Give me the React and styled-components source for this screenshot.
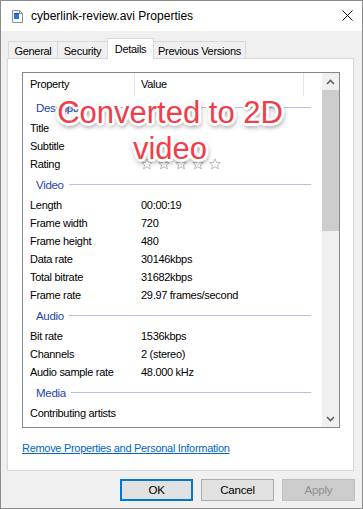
import React from 'react';
import styled, { createGlobalStyle } from 'styled-components';

const GlobalStyle = createGlobalStyle`
  html, body { margin: 0; padding: 0; }
  body {
    width: 363px;
    height: 509px;
    overflow: hidden;
    font-family: "Liberation Sans", Arial, sans-serif;
    -webkit-font-smoothing: antialiased;
  }
`;

const Window = styled.div`
  width: 363px;
  height: 509px;
  box-sizing: border-box;
  border: 1px solid #8c8c8c;
  background: #f0f0f0;
  display: flex;
  flex-direction: column;
`;

const TitleBar = styled.div`
  height: 30px;
  flex: none;
  background: #fff;
  display: flex;
  align-items: center;
  padding-left: 11px;
  gap: 8px;
  font-size: 12px;
  color: #000;
`;

const TitleText = styled.span`
  flex: 1;
  margin-top: -1px;
`;

const CloseBox = styled.div`
  width: 11px;
  height: 11px;
  margin-right: 9px;
  margin-top: -1px;
  display: flex;
`;

const Body = styled.div`
  flex: 1;
  padding: 7px 8px 0 6px;
  display: flex;
  flex-direction: column;
`;

const TabStrip = styled.div`
  display: flex;
  align-items: flex-end;
  height: 21px;
  margin-left: 1px;
  margin-bottom: -1px;
  position: relative;
  z-index: 1;
  font-size: 11px;
  letter-spacing: -0.3px;
`;

const Tab = styled.div`
  box-sizing: border-box;
  width: ${p => p.$w}px;
  height: ${p => (p.$active ? 21 : 18)}px;
  margin-left: -1px;
  border: 1px solid #d9d9d9;
  border-bottom: ${p => (p.$active ? 'none' : '1px solid #d9d9d9')};
  background: ${p => (p.$active ? '#fff' : '#f0f0f0')};
  display: flex;
  align-items: center;
  justify-content: center;
  padding-top: 1px;
  padding-bottom: ${p => (p.$active ? 2 : 0)}px;
  color: #000;
  &:first-child { margin-left: 0; }
`;

const Panel = styled.div`
  box-sizing: border-box;
  height: 413px;
  flex: none;
  background: #fff;
  border: 1px solid #d9d9d9;
  padding: 13px 14px 0 14px;
  display: flex;
  flex-direction: column;
  font-size: 11px;
  letter-spacing: -0.3px;
  color: #000;
`;

const ListBox = styled.div`
  box-sizing: border-box;
  width: 318px;
  height: 356px;
  border: 1px solid #828790;
  display: flex;
  position: relative;
  overflow: hidden;
`;

const ListContent = styled.div`
  flex: 1;
  overflow: hidden;
`;

const HeaderRow = styled.div`
  display: grid;
  grid-template-columns: 112px 169px 1fr;
  height: 23px;
`;

const HeaderCell = styled.div`
  display: flex;
  align-items: center;
  padding-left: ${p => p.$pad}px;
  border-right: ${p => (p.$sep ? '1px solid #e5e5e5' : 'none')};
  margin-top: -2px;
  height: 25px;
`;

const GroupRow = styled.div`
  height: 23px;
  display: flex;
  align-items: center;
  padding-left: 13px;
  padding-right: 11px;
  padding-top: 1px;
  box-sizing: border-box;
`;

const GroupLabel = styled.span`
  color: #2343b0;
  font-size: 11.5px;
`;

const GroupLine = styled.div`
  flex: 1;
  height: 1px;
  background: #b3c0e4;
  margin-left: 5px;
  margin-top: -2px;
`;

const ItemRow = styled.div`
  display: grid;
  grid-template-columns: 112px 1fr;
  height: 18px;
  align-items: center;
`;

const ItemName = styled.span`
  padding-left: 7px;
`;

const ItemValue = styled.span`
  padding-left: 6px;
  display: flex;
  gap: 5px;
`;

const ScrollBar = styled.div`
  width: 17px;
  flex: none;
  background: #f0f0f0;
  display: flex;
  flex-direction: column;
`;

const ScrollArrow = styled.div`
  height: 17px;
  flex: none;
  display: flex;
  align-items: center;
  justify-content: center;
`;

const ScrollThumb = styled.div`
  height: 141px;
  background: #cdcdcd;
  flex: none;
`;

const ScrollTrack = styled.div`
  flex: 1;
`;

const Overlay = styled.div`
  position: absolute;
  top: 22px;
  left: 0;
  width: 294px;
  text-align: center;
  font-family: "Liberation Sans", Arial, sans-serif;
  font-size: 31px;
  line-height: 36px;
  letter-spacing: 0;
  color: #ef3e4a;
  pointer-events: none;
  text-shadow:
    1px 0 0 #fff, -1px 0 0 #fff, 0 1px 0 #fff, 0 -1px 0 #fff,
    2px 0 0 #fff, -2px 0 0 #fff, 0 2px 0 #fff, 0 -2px 0 #fff,
    2px 2px 0 #fff, -2px -2px 0 #fff, 2px -2px 0 #fff, -2px 2px 0 #fff,
    3px 0 1px #fff, -3px 0 1px #fff, 0 3px 1px #fff, 0 -3px 1px #fff,
    1px 3px 5px rgba(0, 0, 0, 0.6),
    0 2px 7px rgba(0, 0, 0, 0.35);
`;

const Link = styled.a`
  margin-top: 13px;
  color: #0066cc;
  text-decoration: underline;
  line-height: 14px;
  align-self: flex-start;
  cursor: pointer;
`;

const ButtonRow = styled.div`
  display: flex;
  justify-content: flex-end;
  gap: 8px;
  margin-top: 8px;
  margin-right: -1px;
`;

const Button = styled.button`
  box-sizing: border-box;
  width: 73px;
  height: 22px;
  padding: 0;
  font-family: "Liberation Sans", Arial, sans-serif;
  font-size: 11.5px;
  letter-spacing: -0.2px;
  background: ${p => (p.disabled ? '#cccccc' : '#e1e1e1')};
  color: ${p => (p.disabled ? '#8f8f8f' : '#000')};
  border: ${p => (p.$primary ? '2px solid #0078d7' : `1px solid ${p.disabled ? '#bfbfbf' : '#adadad'}`)};
`;

const FileIcon = () => (
  <svg width="11" height="13" viewBox="0 0 11 13">
    <path d="M0.5 0.5 H7.5 L10.5 3.5 V12.5 H0.5 Z" fill="#fff" stroke="#8f8f8f" />
    <path d="M7.5 0.5 V3.5 H10.5" fill="none" stroke="#8f8f8f" />
    <rect x="2" y="3" width="5" height="6" fill="#1f7bd6" />
    <rect x="2" y="3" width="5" height="1" fill="#0b4f9e" />
  </svg>
);

const CloseIcon = () => (
  <svg width="11" height="11" viewBox="0 0 11 11">
    <path d="M0.5 0.5 L10.5 10.5 M10.5 0.5 L0.5 10.5" stroke="#111" strokeWidth="1" />
  </svg>
);

const Chevron = ({ down }) => (
  <svg width="9" height="6" viewBox="0 0 9 6">
    <path
      d={down ? 'M1 1 L4.5 4.5 L8 1' : 'M1 5 L4.5 1.5 L8 5'}
      fill="none"
      stroke="#606060"
      strokeWidth="1.6"
    />
  </svg>
);

const Star = () => (
  <svg width="12" height="12" viewBox="0 0 12 12">
    <path
      d="M6 0.8 L7.5 4.4 L11.3 4.6 L8.4 7 L9.4 10.9 L6 8.8 L2.6 10.9 L3.6 7 L0.7 4.6 L4.5 4.4 Z"
      fill="none"
      stroke="#b4b4b4"
      strokeWidth="0.9"
    />
  </svg>
);

const groups = [
  {
    name: 'Description',
    items: [['Title', ''], ['Subtitle', ''], ['Rating', 'stars']],
  },
  {
    name: 'Video',
    items: [
      ['Length', '00:00:19'],
      ['Frame width', '720'],
      ['Frame height', '480'],
      ['Data rate', '30146kbps'],
      ['Total bitrate', '31682kbps'],
      ['Frame rate', '29.97 frames/second'],
    ],
  },
  {
    name: 'Audio',
    items: [
      ['Bit rate', '1536kbps'],
      ['Channels', '2 (stereo)'],
      ['Audio sample rate', '48.000 kHz'],
    ],
  },
  {
    name: 'Media',
    items: [['Contributing artists', '']],
  },
];

const tabs = [
  { label: 'General', w: 50 },
  { label: 'Security', w: 51 },
  { label: 'Details', w: 47, active: true },
  { label: 'Previous Versions', w: 93 },
];

export default function App() {
  return (
    <>
      <GlobalStyle />
      <Window>
        <TitleBar>
          <FileIcon />
          <TitleText>cyberlink-review.avi Properties</TitleText>
          <CloseBox><CloseIcon /></CloseBox>
        </TitleBar>
        <Body>
          <TabStrip>
            {tabs.map(t => (
              <Tab key={t.label} $w={t.w} $active={t.active}>{t.label}</Tab>
            ))}
          </TabStrip>
          <Panel>
            <ListBox>
              <ListContent>
                <HeaderRow>
                  <HeaderCell $pad={7} $sep>Property</HeaderCell>
                  <HeaderCell $pad={6} $sep>Value</HeaderCell>
                  <HeaderCell $pad={0} />
                </HeaderRow>
                {groups.map(g => (
                  <React.Fragment key={g.name}>
                    <GroupRow>
                      <GroupLabel>{g.name}</GroupLabel>
                      <GroupLine />
                    </GroupRow>
                    {g.items.map(([n, v]) => (
                      <ItemRow key={n}>
                        <ItemName>{n}</ItemName>
                        <ItemValue>
                          {v === 'stars'
                            ? [0, 1, 2, 3, 4].map(i => <Star key={i} />)
                            : v}
                        </ItemValue>
                      </ItemRow>
                    ))}
                  </React.Fragment>
                ))}
              </ListContent>
              <ScrollBar>
                <ScrollArrow><Chevron /></ScrollArrow>
                <ScrollThumb />
                <ScrollTrack />
                <ScrollArrow><Chevron down /></ScrollArrow>
              </ScrollBar>
              <Overlay>Converted to 2D<br />video</Overlay>
            </ListBox>
            <Link>Remove Properties and Personal Information</Link>
          </Panel>
          <ButtonRow>
            <Button $primary>OK</Button>
            <Button>Cancel</Button>
            <Button disabled>Apply</Button>
          </ButtonRow>
        </Body>
      </Window>
    </>
  );
}
